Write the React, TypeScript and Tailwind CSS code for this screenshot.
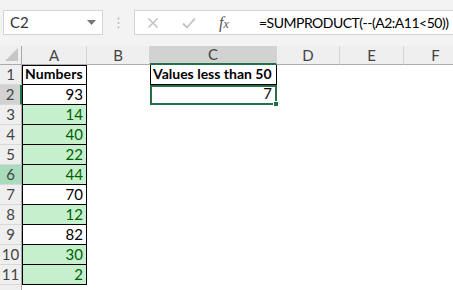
import React from "react";

const cols = ["A", "B", "C", "D", "E", "F"];

const values = [93, 14, 40, 22, 44, 70, 12, 82, 30, 2];

function RowHead({ n }: { n: number }) {
  const selected = n === 2;
  const hover = n === 6;
  return (
    <div
      className={
        "flex items-end justify-center pb-[1px] text-[15px] leading-[18px] text-[#444] border-b border-[#d8d8d8] " +
        (selected
          ? "bg-[#d2d2d2] border-r-2 border-r-[#217346]"
          : hover
          ? "bg-[#a9dcbc] border-r border-r-[#ababab]"
          : "bg-[#efefef] border-r border-r-[#ababab]")
      }
    >
      {n <= 11 ? n : null}
    </div>
  );
}

function ACell({ row }: { row: number }) {
  if (row === 1) {
    return (
      <div className="flex items-end pl-[2px] pb-[1px] border border-black bg-white text-[14px] leading-[18px] font-bold text-black whitespace-nowrap tracking-[0.1px]">
        Numbers
      </div>
    );
  }
  const v = values[row - 2];
  const low = v < 50;
  return (
    <div
      className={
        "flex items-end justify-end pr-[3px] pb-[1px] border-l border-r border-b border-black text-[15px] leading-[18px] " +
        (low ? "bg-[#c6efce] text-[#006100]" : "bg-white text-black")
      }
    >
      {v}
    </div>
  );
}

function CCell({ row }: { row: number }) {
  if (row === 1) {
    return (
      <div className="flex items-end pl-[2px] pb-[1px] border-l border-r border-b border-black text-[14px] leading-[18px] font-bold text-black whitespace-nowrap overflow-hidden">
        Values less than 50
      </div>
    );
  }
  if (row === 2) {
    return (
      <div className="relative flex items-end justify-end pr-[3px] pb-[1px] border-2 border-[#217346] text-[15px] leading-[17px] text-black">
        7
        <div className="absolute right-[-4px] bottom-[-4px] w-[6px] h-[6px] bg-[#217346] border border-white" />
      </div>
    );
  }
  return <div />;
}

export default function App() {
  const rows = Array.from({ length: 12 }, (_, i) => i + 1);
  return (
    <div
      className="w-[453px] h-[290px] overflow-hidden bg-white"
      style={{ fontFamily: "Lato, 'Open Sans', sans-serif" }}
    >
      {/* formula bar */}
      <div className="h-[46px] bg-[#f3f3f3] flex items-start pt-[10px] pl-[3px] overflow-hidden">
        <div className="shrink-0 w-[100px] h-[25px] bg-white border border-[#d4d4d4] flex items-center justify-between pl-[6px] pr-[6px] text-[15px] text-[#333]">
          <span>C2</span>
          <svg width="9" height="5" viewBox="0 0 9 5">
            <path d="M0 0 L9 0 L4.5 5 Z" fill="#777" />
          </svg>
        </div>
        <div className="shrink-0 w-[31px] h-[25px] flex items-center justify-center">
          <svg width="3" height="12" viewBox="0 0 3 12">
            <circle cx="1.5" cy="1.5" r="1" fill="#b5b5b5" />
            <circle cx="1.5" cy="6" r="1" fill="#b5b5b5" />
            <circle cx="1.5" cy="10.5" r="1" fill="#b5b5b5" />
          </svg>
        </div>
        <div className="shrink-0 w-[340px] h-[25px] bg-white border border-[#d4d4d4] border-r-0 flex items-center">
          <div className="shrink-0 w-[36px] flex justify-center">
            <svg width="12" height="12" viewBox="0 0 12 12">
              <path d="M1.5 1.5 L10.5 10.5 M10.5 1.5 L1.5 10.5" stroke="#c2c2c2" strokeWidth="1.6" />
            </svg>
          </div>
          <div className="shrink-0 w-[36px] flex justify-center">
            <svg width="14" height="12" viewBox="0 0 14 12">
              <path d="M1 6.5 L5 10.5 L13 1.5" stroke="#c2c2c2" strokeWidth="1.8" fill="none" />
            </svg>
          </div>
          <div
            className="shrink-0 w-[34px] flex justify-center items-baseline italic text-[16px] text-[#555]"
            style={{ fontFamily: "'Liberation Serif', serif" }}
          >
            f<span className="text-[12px]">x</span>
          </div>
          <div
            className="pl-[18px] text-[14px] text-black whitespace-nowrap tracking-[-0.5px]"
            style={{ fontFamily: "Lato, sans-serif" }}
          >
            =SUMPRODUCT(--(A2:A11&lt;50))
          </div>
        </div>
      </div>

      {/* grid */}
      <div className="grid grid-cols-[22px_65px_63px_127px_63px_64px_64px] grid-rows-[19px] auto-rows-[20px]">
        <div className="bg-[#efefef] border-r border-b border-[#ababab] flex items-end justify-end pr-[3px] pb-[3px]">
          <svg width="13" height="13" viewBox="0 0 13 13">
            <path d="M13 0 L13 13 L0 13 Z" fill="#c6c6c6" />
          </svg>
        </div>
        {cols.map((c) => (
          <div
            key={c}
            className={
              "flex items-center justify-center text-[15px] text-[#444] border-r border-[#d4d4d4] " +
              (c === "C"
                ? "bg-[#d2d2d2] border-b-2 border-b-[#217346]"
                : "bg-[#efefef] border-b border-b-[#ababab]")
            }
          >
            {c}
          </div>
        ))}
        {rows.map((r) => (
          <React.Fragment key={r}>
            <RowHead n={r} />
            {r <= 11 ? <ACell row={r} /> : <div />}
            <div />
            <CCell row={r} />
            <div />
            <div />
            <div />
          </React.Fragment>
        ))}
      </div>
    </div>
  );
}
